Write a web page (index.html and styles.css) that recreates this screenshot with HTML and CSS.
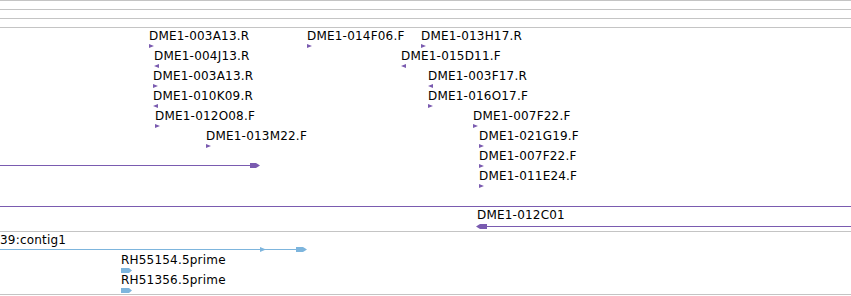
FILE: index.html
```html
<!doctype html>
<html lang="en">
  <head>
    <meta charset="UTF-8" />
    <meta name="viewport" content="width=device-width, initial-scale=1.0" />
    <title>Tracks</title>
    <link rel="stylesheet" href="styles.css">
  </head>
  <body>
    <div class="panel">
      <!-- empty tracks -->
      <div class="track track-empty"></div>
      <div class="track track-empty"></div>
      <div class="track track-empty"></div>

      <!-- genomic clone ends -->
      <div class="track track-clones">
        <div class="feat" style="left: 148px; top: 1px"><span class="label">DME1-003A13.R</span><i class="mark fwd"></i></div>
        <div class="feat" style="left: 153px; top: 21px"><span class="label">DME1-004J13.R</span><i class="mark rev"></i></div>
        <div class="feat" style="left: 152px; top: 41px"><span class="label">DME1-003A13.R</span><i class="mark fwd"></i></div>
        <div class="feat" style="left: 152px; top: 61px"><span class="label">DME1-010K09.R</span><i class="mark rev"></i></div>
        <div class="feat" style="left: 154px; top: 81px"><span class="label">DME1-012O08.F</span><i class="mark fwd"></i></div>
        <div class="feat" style="left: 205px; top: 101px"><span class="label">DME1-013M22.F</span><i class="mark fwd"></i></div>
        <div class="feat" style="left: 306px; top: 1px"><span class="label">DME1-014F06.F</span><i class="mark fwd"></i></div>
        <div class="feat" style="left: 420px; top: 1px"><span class="label">DME1-013H17.R</span><i class="mark fwd"></i></div>
        <div class="feat" style="left: 400px; top: 21px"><span class="label">DME1-015D11.F</span><i class="mark rev"></i></div>
        <div class="feat" style="left: 427px; top: 41px"><span class="label">DME1-003F17.R</span><i class="mark rev"></i></div>
        <div class="feat" style="left: 427px; top: 61px"><span class="label">DME1-016O17.F</span><i class="mark fwd"></i></div>
        <div class="feat" style="left: 472px; top: 81px"><span class="label">DME1-007F22.F</span><i class="mark fwd"></i></div>
        <div class="feat" style="left: 478px; top: 101px"><span class="label">DME1-021G19.F</span><i class="mark fwd"></i></div>
        <div class="feat" style="left: 478px; top: 121px"><span class="label">DME1-007F22.F</span><i class="mark fwd"></i></div>
        <div class="feat" style="left: 478px; top: 141px"><span class="label">DME1-011E24.F</span><i class="mark fwd"></i></div>

        <svg class="span" style="left: 0; top: 135px" width="262" height="5">
          <rect x="0" y="2" width="251" height="1" />
          <polygon points="250,0 256,0 260,2.5 256,5 250,5" />
        </svg>

        <div class="rule" style="top: 178px"></div>

        <div class="feat" style="left: 476px; top: 180px"><span class="label">DME1-012C01</span></div>
        <svg class="span" style="left: 476px; top: 196px" width="375" height="5">
          <polygon points="0,2.5 4,0 11,0 11,5 4,5" />
          <rect x="10" y="2" width="365" height="1" />
        </svg>
      </div>

      <!-- ESTs -->
      <div class="track track-est">
        <div class="feat" style="left: -1px; top: 1px"><span class="label">39:contig1</span></div>
        <svg class="span est" style="left: 0; top: 15px" width="310" height="5">
          <rect x="0" y="2" width="297" height="1" />
          <polygon points="260,0 266,2.5 260,5" />
          <polygon points="296,0 303,0 307,2.5 303,5 296,5" />
        </svg>
        <div class="feat" style="left: 120px; top: 21px">
          <span class="label">RH55154.5prime</span>
          <svg class="est-mark" width="12" height="5"><polygon points="0,0 8,0 11,2.5 8,5 0,5" /></svg>
        </div>
        <div class="feat" style="left: 120px; top: 41px">
          <span class="label">RH51356.5prime</span>
          <svg class="est-mark" width="12" height="5"><polygon points="0,0 8,0 11,2.5 8,5 0,5" /></svg>
        </div>
      </div>
    </div>
  </body>
</html>
```

FILE: styles.css
```css
/* genome browser panel */
body {
  margin: 0;
  background: #fff;
  font-family: "DejaVu Sans", sans-serif;
  font-size: 12px;
  color: #000;
}
.panel {
  width: 851px;
  height: 296px;
  overflow: hidden;
}
.track {
  position: relative;
  border-top: 1px solid #c4c4c4;
}
.track-empty {
  height: 8px;
}
.track-clones {
  height: 203px;
}
.track-est {
  height: 62px;
  border-bottom: 1px solid #c4c4c4;
}
.feat {
  position: absolute;
}
.label {
  display: block;
  margin-left: 1px;
  line-height: 14px;
  white-space: nowrap;
  letter-spacing: 0.2px;
}
.mark {
  display: block;
  width: 0;
  height: 0;
  margin: 1px 0 0 1px;
  border-top: 2.5px solid transparent;
  border-bottom: 2.5px solid transparent;
}
.mark.fwd {
  border-left: 5px solid #7a5bb0;
}
.mark.rev {
  border-right: 5px solid #7a5bb0;
}
.span {
  position: absolute;
  display: block;
  fill: #7a5bb0;
}
.span.est {
  fill: #7db5dd;
}
.rule {
  position: absolute;
  left: 0;
  right: 0;
  height: 1px;
  background: #7a5bb0;
}
.est-mark {
  display: block;
  margin: 1px 0 0 1px;
  fill: #7db5dd;
}
```
